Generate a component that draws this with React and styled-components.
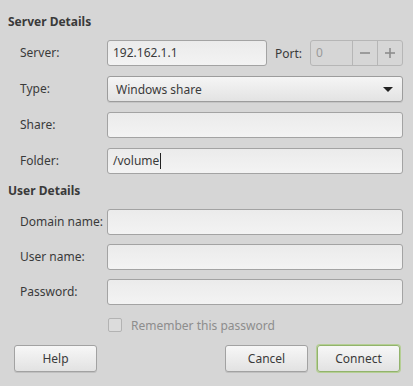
import React from 'react'
import styled, { createGlobalStyle } from 'styled-components'

const Global = createGlobalStyle`
  html, body {
    margin: 0;
    padding: 0;
    background: #d6d6d6;
  }
  body {
    font-family: "Noto Sans", "Open Sans", sans-serif;
    font-size: 12px;
    color: #3a3a3a;
  }
`

const Dialog = styled.div`
  width: 413px;
  height: 386px;
  box-sizing: border-box;
  padding: 13px 10px 0 8px;
  display: flex;
  flex-direction: column;
`

const Heading = styled.div`
  font-weight: bold;
  height: 18px;
  line-height: 18px;
  margin-bottom: ${p => p.$gap}px;
`

const Form = styled.div`
  display: grid;
  grid-template-columns: 87px 1fr;
  row-gap: ${p => p.$gap}px;
  padding-left: 12px;
  margin-bottom: ${p => p.$after}px;
`

const Label = styled.div`
  height: 26px;
  line-height: 25px;
  white-space: nowrap;
`

const Entry = styled.div`
  height: 26px;
  box-sizing: border-box;
  border: 1px solid #a3a3a3;
  border-radius: 3px;
  background: linear-gradient(#ebebeb, #f3f3f3);
  padding: 0 5px;
  line-height: 24px;
  display: flex;
  align-items: center;
  flex: 1;
`

const Caret = styled.span`
  display: inline-block;
  width: 1px;
  height: 16px;
  background: #222;
  margin-left: 1px;
`

const ServerLine = styled.div`
  display: flex;
  align-items: center;
  gap: 8px;
`

const PortLabel = styled.span`
  white-space: nowrap;
`

const Spin = styled.div`
  width: 93px;
  height: 26px;
  box-sizing: border-box;
  border: 1px solid #b6b6b6;
  border-radius: 3px;
  display: flex;
  flex-shrink: 0;
`

const SpinValue = styled.div`
  flex: 1;
  padding-left: 5px;
  line-height: 24px;
  color: #9a9a9a;
`

const SpinBtn = styled.div`
  width: 24px;
  border-left: 1px solid #b6b6b6;
  display: flex;
  align-items: center;
  justify-content: center;
`

const Combo = styled.div`
  height: 26px;
  box-sizing: border-box;
  border: 1px solid #9c9c9c;
  border-radius: 3px;
  background: linear-gradient(#f5f5f5, #e3e3e3);
  box-shadow: 0 1px 0 rgba(0, 0, 0, 0.08);
  padding: 0 9px 0 8px;
  display: flex;
  align-items: center;
  justify-content: space-between;
`

const Arrow = styled.span`
  width: 0;
  height: 0;
  border-left: 5px solid transparent;
  border-right: 5px solid transparent;
  border-top: 5px solid #222;
`

const CheckLine = styled.div`
  display: flex;
  align-items: center;
  gap: 9px;
  padding-left: 100px;
  height: 14px;
  color: #8d8d8d;
  margin-bottom: 13px;
`

const Box = styled.span`
  width: 12px;
  height: 12px;
  border: 1px solid #b3b3b3;
  border-radius: 2px;
  background: #dcdcdc;
`

const Buttons = styled.div`
  display: flex;
  align-items: center;
  padding-left: 6px;
`

const Button = styled.div`
  width: 83px;
  height: 27px;
  box-sizing: border-box;
  border: 1px solid ${p => (p.$default ? '#92b36c' : '#a2a2a2')};
  box-shadow: ${p => (p.$default ? '0 0 0 1px #b5cf94' : '0 1px 0 rgba(0,0,0,0.1)')};
  border-radius: 3px;
  background: linear-gradient(#f7f7f7, #e2e2e2);
  display: flex;
  align-items: center;
  justify-content: center;
  margin-left: ${p => p.$ml || 0}px;
`

function Sign({ plus }) {
  return (
    <svg width="12" height="12" viewBox="0 0 12 12">
      <path d="M1 6h10" stroke="#8c8c8c" strokeWidth="1.6" />
      {plus && <path d="M6 1v10" stroke="#8c8c8c" strokeWidth="1.6" />}
    </svg>
  )
}

export default function App() {
  return (
    <>
      <Global />
      <Dialog>
        <Heading $gap={9}>Server Details</Heading>
        <Form $gap={10} $after={8}>
          <Label>Server:</Label>
          <ServerLine>
            <Entry>192.162.1.1</Entry>
            <PortLabel>Port:</PortLabel>
            <Spin>
              <SpinValue>0</SpinValue>
              <SpinBtn><Sign /></SpinBtn>
              <SpinBtn><Sign plus /></SpinBtn>
            </Spin>
          </ServerLine>
          <Label>Type:</Label>
          <Combo>
            <span>Windows share</span>
            <Arrow />
          </Combo>
          <Label>Share:</Label>
          <Entry />
          <Label>Folder:</Label>
          <Entry>
            /volume<Caret />
          </Entry>
        </Form>
        <Heading $gap={9}>User Details</Heading>
        <Form $gap={9} $after={13}>
          <Label>Domain name:</Label>
          <Entry />
          <Label>User name:</Label>
          <Entry />
          <Label>Password:</Label>
          <Entry />
        </Form>
        <CheckLine>
          <Box />
          <span>Remember this password</span>
        </CheckLine>
        <Buttons>
          <Button>Help</Button>
          <Button $ml={128}>Cancel</Button>
          <Button $ml={9} $default>Connect</Button>
        </Buttons>
      </Dialog>
    </>
  )
}
